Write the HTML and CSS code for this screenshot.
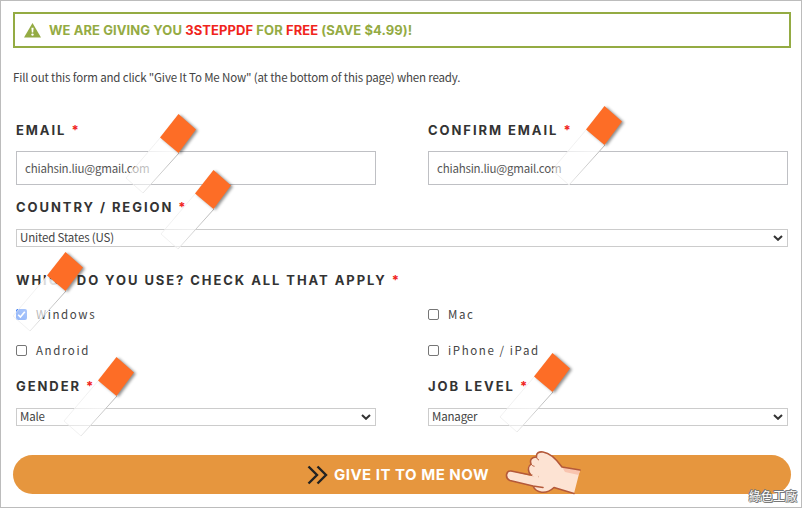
FILE: index.html
```
<!DOCTYPE html>
<html lang="en">
<head>
    <meta charset="utf-8">
    <title>Give It To Me Now</title>
    <link rel="stylesheet" href="styles.css">
</head>
<body>
    <svg class="defs" width="0" height="0" aria-hidden="true">
        <linearGradient id="tape" gradientUnits="userSpaceOnUse" x1="45" y1="32" x2="10" y2="73">
            <stop offset="0" stop-color="#fff" stop-opacity=".88"/>
            <stop offset="1" stop-color="#fff" stop-opacity=".5"/>
        </linearGradient>
        <linearGradient id="edge" gradientUnits="userSpaceOnUse" x1="54" y1="41" x2="19" y2="81">
            <stop offset="0" stop-color="#b4b4b4"/>
            <stop offset="1" stop-color="#e8e8e8"/>
        </linearGradient>
        <symbol id="marker" viewBox="0 0 84 90">
            <path d="M35 26 1 66l17 15 36-40z" fill="url(#tape)"/>
            <path d="M35 26 1 66l17 15" fill="none" stroke="#eee" stroke-width=".8"/>
            <path d="M18 81 54 41" stroke="url(#edge)" stroke-width="1"/>
            <path class="marker-head" d="M53.500 2 71 17.500 53.500 41 35 25.500z" fill="#fd6d26"/>
        </symbol>
    </svg>

    <form class="page">
        <div class="alert">
            <svg class="alert-icon" width="17" height="15" viewBox="0 0 17 15">
                <path d="M8.500 0 17 14.500H0z" fill="#94ab43"/>
                <path d="M7.400 4.800h2.200l-.4 4.700H7.800z" fill="#fff"/>
                <circle cx="8.500" cy="11.600" r="1.200" fill="#fff"/>
            </svg>
            <strong class="alert-text">WE ARE GIVING YOU <em>3STEPPDF</em> FOR <em>FREE</em> (SAVE $4.99)!</strong>
        </div>

        <p class="intro">Fill out this form and click "Give It To Me Now" (at the bottom of this page) when ready.</p>

        <div class="row row-email">
            <div class="field">
                <label class="title" for="email">EMAIL <i>*</i></label>
                <input class="text" id="email" type="text" value="chiahsin.liu@gmail.com">
            </div>
            <div class="field">
                <label class="title" for="confirm">CONFIRM EMAIL <i>*</i></label>
                <input class="text" id="confirm" type="text" value="chiahsin.liu@gmail.com">
            </div>
        </div>

        <div class="field field-country">
            <span class="title">COUNTRY / REGION <i>*</i></span>
            <div class="select"><span>United States (US)</span><svg width="10" height="6" viewBox="0 0 10 6"><path d="M1 1l4 3.800L9 1"/></svg></div>
        </div>

        <div class="field field-device">
            <span class="title">WHICH DO YOU USE? CHECK ALL THAT APPLY <i>*</i></span>
            <div class="checks">
                <label class="check"><span class="box checked"><svg width="11" height="11" viewBox="0 0 11 11"><path d="M2.200 5.800l2.200 2.200 4.400-5.300"/></svg></span>Windows</label>
                <label class="check"><span class="box"></span>Mac</label>
                <label class="check"><span class="box"></span>Android</label>
                <label class="check"><span class="box"></span>iPhone / iPad</label>
            </div>
        </div>

        <div class="row row-last">
            <div class="field">
                <span class="title">GENDER <i>*</i></span>
                <div class="select"><span>Male</span><svg width="10" height="6" viewBox="0 0 10 6"><path d="M1 1l4 3.800L9 1"/></svg></div>
            </div>
            <div class="field">
                <span class="title">JOB LEVEL <i>*</i></span>
                <div class="select"><span>Manager</span><svg width="10" height="6" viewBox="0 0 10 6"><path d="M1 1l4 3.800L9 1"/></svg></div>
            </div>
        </div>

        <button class="submit" type="button">
            <svg width="22" height="20" viewBox="0 0 22 20"><path d="M1.500 1.500 10 10l-8.500 8.500M10.500 1.500 19 10l-8.500 8.500"/></svg>
            <span>GIVE IT TO ME NOW</span>
        </button>
    </form>

    <!-- tape markers pointing at the fields -->
    <svg class="marker marker-email"><use href="#marker"/></svg>
    <svg class="marker marker-confirm"><use href="#marker"/></svg>
    <svg class="marker marker-country"><use href="#marker"/></svg>
    <svg class="marker marker-device"><use href="#marker"/></svg>
    <svg class="marker marker-gender"><use href="#marker"/></svg>
    <svg class="marker marker-job"><use href="#marker"/></svg>

    <svg class="hand" width="78" height="46" viewBox="0 0 78 46">
        <path d="M26 26 6 21C1 20.500-.5 28 5 30.500L28 36c3 7 13 9 21 1.500L69 43.500l6-23.500-18-3C52 10 45 3 38 2c-4-.6-7 1-6.500 5-5 0-7 3-5.500 7-4.500 2.500-4 7 0 12z" fill="#fde3d3"/>
        <path d="M57 17l18 3-1.300 5L60 22z" fill="#f9c4af"/>
        <path d="M33 26.500 6 21C1 20.500-.5 28 5 30.500L28 36c3 7 13 9 21 1.500L69 43.500M28 36l10 1.500M26 25c-4-4-3-8.500 0-11-1.500-4 .5-7 5.500-7-.5-4 2.500-5.600 6.500-5C45 3 52 10 57 17l18 3" fill="none" stroke="#b4593a" stroke-width="1.600" stroke-linecap="round" stroke-linejoin="round"/>
        <path d="M27.500 24.800l6 2" stroke="#fde3d3" stroke-width="3"/>
        <path d="M26 14c1 1.500 2 2 3.500 2.300M31.500 7c.3 1.500 1 2.500 2.500 3" fill="none" stroke="#b4593a" stroke-width="1"/>
    </svg>
    <span class="watermark">綠色工廠</span>
</body>
</html>
```
FILE: styles.css
```
* {
    box-sizing: border-box;
}
body {
    margin: 0;
    height: 508px;
    position: relative;
    overflow: hidden;
    background: #fff;
    color: #444;
    font-family: "Noto Sans CJK SC", "Noto Sans", sans-serif;
    font-size: 11.5px;
    letter-spacing: -0.16px;
}
.defs {
    position: absolute;
}
.page {
    height: 508px;
    padding: 11px 10px 0 12px;
    border: 1px solid #bcbcbc;
    display: flex;
    flex-direction: column;
}
.alert {
    height: 36px;
    border: 2px solid #94ab43;
    display: flex;
    align-items: center;
    padding-left: 9px;
    gap: 8px;
}
.alert-text {
    font: 700 13px/1 Inter, sans-serif;
    letter-spacing: 0.08px;
    color: #94ab43;
}
.alert-text em {
    font-style: normal;
    color: #f0241c;
}
.intro {
    margin: 18px 0 0;
    height: 22px;
    line-height: 22px;
}
.row {
    display: flex;
    gap: 52px;
    padding: 0 3px;
}
.row .field {
    flex: 1;
}
.row-email {
    margin-top: 30px;
}
.field {
    display: flex;
    flex-direction: column;
}
.title {
    height: 24px;
    font: 700 13px/24px Inter, sans-serif;
    letter-spacing: 1.93px;
    color: #333;
    white-space: nowrap;
}
.title i {
    font-style: normal;
    color: #f0241c;
}
.text {
    height: 34px;
    margin-top: 9px;
    padding: 0 8px 1px;
    border: 1px solid #bfc0c4;
    border-radius: 0;
    font: inherit;
    letter-spacing: -0.2px;
    color: #555;
}
.field-country {
    margin-top: 10px;
    padding: 0 3px;
}
.select {
    height: 18px;
    margin-top: 10px;
    padding: 0 4px 1px 3px;
    border: 1px solid #ccc;
    display: flex;
    align-items: center;
    justify-content: space-between;
    line-height: 15px;
}
.select svg,
.box svg,
.submit svg {
    fill: none;
    stroke: #333;
    stroke-width: 2;
}
.field-device {
    margin-top: 21px;
    padding: 0 3px;
}
.checks {
    display: grid;
    grid-template-columns: 360px 360px;
    column-gap: 52px;
    grid-auto-rows: 36px;
    margin-top: 4px;
}
.check {
    display: flex;
    align-items: center;
    gap: 9px;
    letter-spacing: 1.6px;
}
.box {
    width: 11px;
    height: 11px;
    border: 1px solid #767676;
    border-radius: 2px;
}
.box.checked {
    border: 0;
    background: #2f73f5;
}
.box svg {
    display: block;
    stroke: #fff;
    stroke-width: 1.6;
}
.row-last {
    margin-top: 6px;
}
.submit {
    height: 39px;
    margin-top: 29px;
    padding: 0 8px 0 0;
    border: 0;
    border-radius: 20px;
    background: #e6963e;
    color: #fff;
    font: 700 15px/1 Inter, sans-serif;
    letter-spacing: 0.5px;
    display: flex;
    align-items: center;
    justify-content: center;
    gap: 5px;
}
.submit svg {
    stroke: #222;
    stroke-width: 2.4;
}
.marker {
    position: absolute;
    width: 84px;
    height: 90px;
}
.marker-head {
    filter: drop-shadow(2px 1px 1.5px rgba(0, 0, 0, .45));
}
.marker-email {
    left: 125px;
    top: 112px;
}
.marker-confirm {
    left: 551px;
    top: 104px;
}
.marker-country {
    left: 160px;
    top: 168px;
}
.marker-device {
    left: 12px;
    top: 250px;
}
.marker-gender {
    left: 63px;
    top: 355px;
}
.marker-job {
    left: 499px;
    top: 351px;
}
.hand {
    position: absolute;
    left: 505px;
    top: 450px;
}
.watermark {
    position: absolute;
    left: 749px;
    top: 489px;
    font: 12px/14px "Noto Sans CJK TC", sans-serif;
    letter-spacing: 0;
    color: #fff;
    text-shadow: 1px 0 #777, -1px 0 #777, 0 1px #777, 0 -1px #777, 1px 1px #777, -1px -1px #777;
}
```
